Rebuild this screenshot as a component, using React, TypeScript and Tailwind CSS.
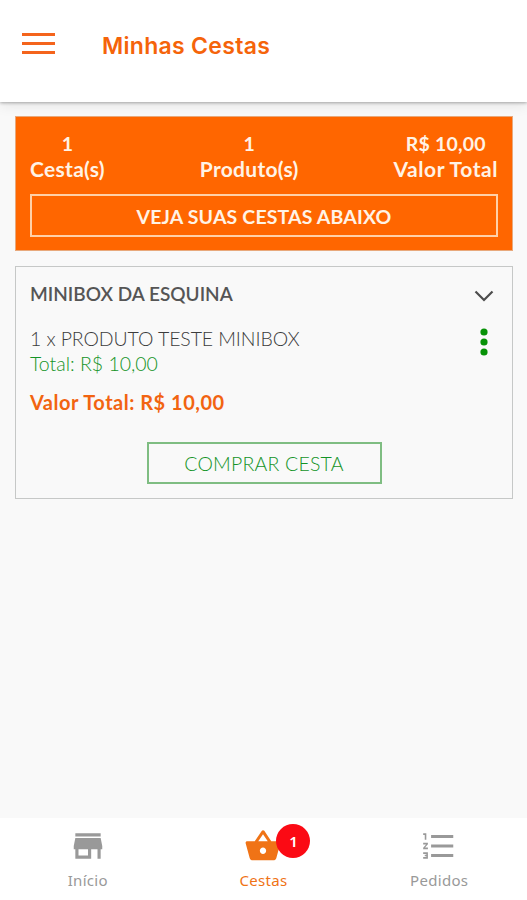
import { useState } from 'react'
import { MdFormatListNumbered, MdShoppingBasket, MdStore } from 'react-icons/md'

const summary = [
  { value: '1', label: 'Cesta(s)', valueClass: '', labelClass: 'tracking-[0.3px]' },
  { value: '1', label: 'Produto(s)', valueClass: '', labelClass: 'tracking-[0.3px]' },
  { value: 'R$ 10,00', label: 'Valor Total', valueClass: 'tracking-[0.2px]', labelClass: 'tracking-[0.55px]' },
]

const tabs = [
  { id: 'inicio', label: 'Início', icon: MdStore, badge: 0 },
  { id: 'cestas', label: 'Cestas', icon: MdShoppingBasket, badge: 1 },
  { id: 'pedidos', label: 'Pedidos', icon: MdFormatListNumbered, badge: 0 },
]

function Header() {
  return (
    <header className="relative z-10 flex h-[102px] items-start bg-white pl-[22px] shadow-[0_1px_3px_rgba(0,0,0,0.3),0_4px_12px_rgba(0,0,0,0.08)]">
      <button className="mt-[33px] flex w-[33px] flex-col gap-[6px]" aria-label="Menu">
        <span className="h-[3px] w-full bg-[#f4641c]" />
        <span className="h-[3px] w-full bg-[#f4641c]" />
        <span className="h-[3px] w-full bg-[#f4641c]" />
      </button>
      <h1 className="mt-[31px] ml-[47px] font-['Inter',sans-serif] text-[23px] leading-[30px] font-semibold tracking-[0.3px] text-[#f5640a]">
        Minhas Cestas
      </h1>
    </header>
  )
}

function Summary() {
  return (
    <section className="h-[135px] border border-[#e8a97c] bg-[#ff6600] px-[14px] pt-[14px] font-bold text-[#fff3e6]">
      <div className="flex justify-between text-center leading-[25px] whitespace-nowrap">
        {summary.map((item) => (
          <div key={item.label}>
            <p className={`text-[19.5px] ${item.valueClass}`}>{item.value}</p>
            <p className={`text-[21px] ${item.labelClass}`}>{item.label}</p>
          </div>
        ))}
      </div>
      <div className="mt-[13px] flex h-[43px] items-center justify-center border-2 border-[#ffd0a8] pt-[2px] text-[19.5px] tracking-[0.15px]">
        VEJA SUAS CESTAS ABAIXO
      </div>
    </section>
  )
}

function Basket() {
  return (
    <section className="mt-[15px] h-[233px] border border-[#c6c8c7] px-[14px] pt-[14px] whitespace-nowrap">
      <div className="flex h-[26px] items-center justify-between">
        <h2 className="text-[19px] font-semibold text-[#555]">MINIBOX DA ESQUINA</h2>
        <svg width="20" height="12" viewBox="0 0 20 12" fill="none" className="mt-[3px] mr-[4px]">
          <path d="M1.5 1.5 10 10l8.5-8.5" stroke="#4d4d4d" strokeWidth="2.2" />
        </svg>
      </div>

      <div className="mt-[19px] flex justify-between">
        <div className="text-[19.5px] leading-[25px] font-light">
          <p className="tracking-[-0.1px] text-[#3c3c3c]">1 x PRODUTO TESTE MINIBOX</p>
          <p className="text-[#149427]">Total: R$ 10,00</p>
        </div>
        <svg width="8" height="28" viewBox="0 0 8 28" fill="#079207" className="mt-[2px] mr-[10px]">
          <circle cx="4" cy="4" r="3.6" />
          <circle cx="4" cy="14" r="3.6" />
          <circle cx="4" cy="24" r="3.6" />
        </svg>
      </div>

      <p className="mt-[14px] text-[20px] leading-[25px] font-bold tracking-[0.5px] text-[#f26411]">
        Valor Total: R$ 10,00
      </p>
      <button className="mx-auto mt-[27px] flex h-[42px] w-[235px] items-center justify-center border-2 border-[#7fbd82] pt-[2px] text-[19.5px] font-light tracking-[0.2px] text-[#149427]">
        COMPRAR CESTA
      </button>
    </section>
  )
}

export default function App() {
  const [active, setActive] = useState('cestas')

  return (
    <div className="flex h-[900px] w-[527px] flex-col overflow-hidden bg-[#f9f9f9] font-['Lato',sans-serif]">
      <Header />
      <main className="flex-1 px-[14px] pt-[14px] pl-[15px]">
        <Summary />
        <Basket />
      </main>
      <nav className="grid h-[82px] grid-cols-3 bg-white font-['Noto_Sans',sans-serif]">
        {tabs.map((tab) => (
          <button
            key={tab.id}
            onClick={() => setActive(tab.id)}
            className={`flex flex-col items-center pt-[9px] ${active === tab.id ? 'text-[#f07316]' : 'text-[#999]'}`}
          >
            <span className="relative">
              <tab.icon size={38} />
              {tab.badge > 0 && (
                <span className="absolute -top-[3px] left-[32px] flex size-[34px] items-center justify-center rounded-full bg-[#fb0a14] text-[15px] font-semibold text-white">
                  {tab.badge}
                </span>
              )}
            </span>
            <span className="mt-[5px] text-[15px] leading-[20px] tracking-[0.3px]">{tab.label}</span>
          </button>
        ))}
      </nav>
    </div>
  )
}
